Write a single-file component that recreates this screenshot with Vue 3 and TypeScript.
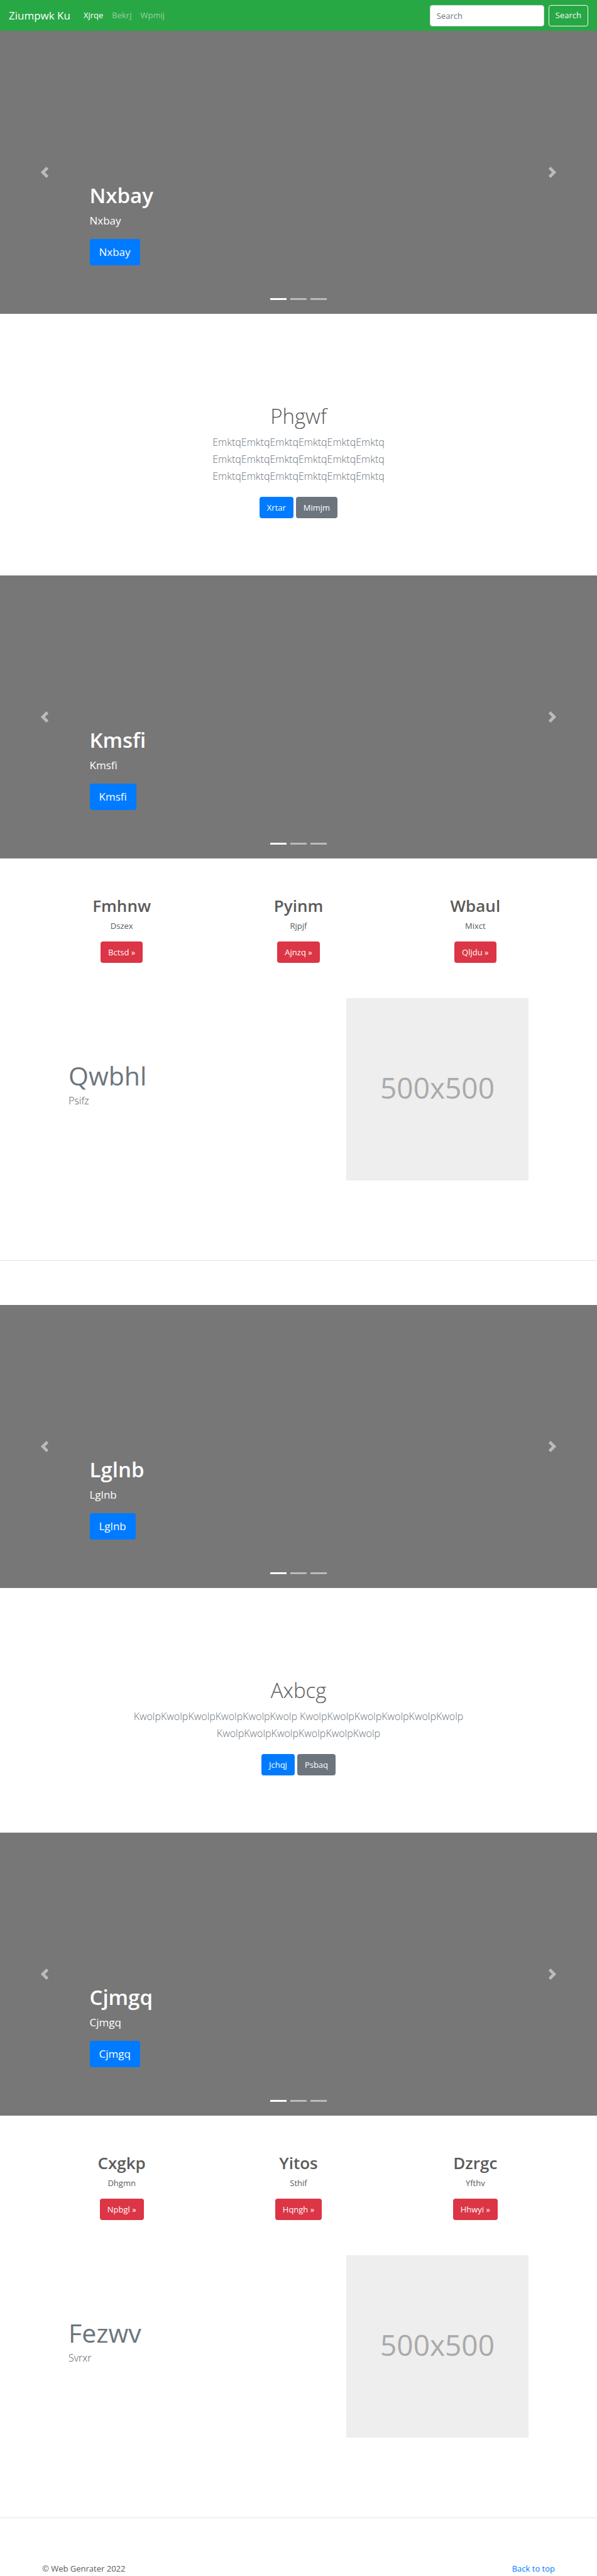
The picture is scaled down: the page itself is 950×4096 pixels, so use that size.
<script setup lang="ts">
import { ref } from 'vue'

interface Card {
  title: string
  text: string
  action: string
}

interface Intro {
  title: string
  text: string
  primary: string
  secondary: string
}

interface Block {
  hero: string
  intro: Intro
  banner: string
  cards: Card[]
  feature: { title: string; text: string }
}

const query = ref('')
const links = ['Xjrqe', 'Bekrj', 'Wpmij']

const repeat = (word: string): string => Array(3).fill(word.repeat(6)).join(' ')

const blocks: Block[] = [
  {
    hero: 'Nxbay',
    intro: { title: 'Phgwf', text: repeat('Emktq'), primary: 'Xrtar', secondary: 'Mimjm' },
    banner: 'Kmsfi',
    cards: [
      { title: 'Fmhnw', text: 'Dszex', action: 'Bctsd »' },
      { title: 'Pyinm', text: 'Rjpjf', action: 'Ajnzq »' },
      { title: 'Wbaul', text: 'Mixct', action: 'Qljdu »' },
    ],
    feature: { title: 'Qwbhl', text: 'Psifz' },
  },
  {
    hero: 'Lglnb',
    intro: { title: 'Axbcg', text: repeat('Kwolp'), primary: 'Jchqj', secondary: 'Psbaq' },
    banner: 'Cjmgq',
    cards: [
      { title: 'Cxgkp', text: 'Dhgmn', action: 'Npbgl »' },
      { title: 'Yitos', text: 'Sthif', action: 'Hqngh »' },
      { title: 'Dzrgc', text: 'Yfthv', action: 'Hhwyi »' },
    ],
    feature: { title: 'Fezwv', text: 'Svrxr' },
  },
]
</script>

<template>
  <div class="page">
    <header class="navbar">
      <a class="brand" href="#">Ziumpwk Ku</a>
      <nav class="links">
        <a v-for="(link, i) in links" :key="link" href="#" :class="{ active: i === 0 }">{{ link }}</a>
      </nav>
      <form class="search" @submit.prevent>
        <input v-model="query" type="search" placeholder="Search" aria-label="Search" />
        <button type="submit">Search</button>
      </form>
    </header>

    <main>
      <template v-for="block in blocks" :key="block.hero">
        <template v-for="name in [block.hero, block.banner]" :key="name">
          <section class="carousel">
            <button class="control prev" type="button" aria-label="Previous">
              <svg viewBox="0 0 8 8"><path d="M5.25 0l-4 4 4 4 1.5-1.5L4.25 4l2.5-2.5L5.25 0z" /></svg>
            </button>
            <div class="caption">
              <h1>{{ name }}</h1>
              <p>{{ name }}</p>
              <a class="btn btn-lg primary" href="#">{{ name }}</a>
            </div>
            <button class="control next" type="button" aria-label="Next">
              <svg viewBox="0 0 8 8"><path d="M2.75 0l-1.5 1.5L3.75 4l-2.5 2.5L2.75 8l4-4-4-4z" /></svg>
            </button>
            <div class="indicators">
              <button v-for="n in 3" :key="n" type="button" :class="{ active: n === 1 }" :aria-label="`Slide ${n}`"></button>
            </div>
          </section>

          <section v-if="name === block.hero" class="intro">
            <h1>{{ block.intro.title }}</h1>
            <p>{{ block.intro.text }}</p>
            <div class="actions">
              <a class="btn primary" href="#">{{ block.intro.primary }}</a>
              <a class="btn secondary" href="#">{{ block.intro.secondary }}</a>
            </div>
          </section>
        </template>

        <section class="cards">
          <article v-for="card in block.cards" :key="card.title">
            <h2>{{ card.title }}</h2>
            <p>{{ card.text }}</p>
            <a class="btn danger" href="#">{{ card.action }}</a>
          </article>
        </section>

        <section class="feature">
          <div class="feature-text">
            <h2>{{ block.feature.title }}</h2>
            <p>{{ block.feature.text }}</p>
          </div>
          <div class="placeholder">500x500</div>
        </section>

        <hr />
      </template>
    </main>

    <footer class="footer">
      <span>© Web Genrater 2022</span>
      <a href="#">Back to top</a>
    </footer>
  </div>
</template>

<style>
body {
  margin: 0;
  background: #fff;
}
</style>

<style scoped>
.page {
  font-family: 'Open Sans', 'Noto Sans', sans-serif;
  font-size: 13px;
  line-height: 21px;
  color: #5a5a5a;
}

.page * {
  box-sizing: border-box;
}

h1,
h2,
p {
  margin: 0;
}

a {
  text-decoration: none;
}

button,
input {
  font: inherit;
}

.navbar {
  display: flex;
  align-items: center;
  height: 49px;
  padding: 0 14px;
  background: #28a745;
}

.brand {
  margin-right: 14px;
  font-size: 17px;
  color: #fff;
}

.links {
  display: flex;
  margin-right: auto;
}

.links a {
  padding: 0 7px;
  color: rgba(255, 255, 255, 0.5);
}

.links a.active {
  color: #fff;
}

.search {
  display: flex;
  gap: 7px;
}

.search input {
  width: 182px;
  height: 34px;
  padding: 0 10px;
  border: 1px solid #ced4da;
  border-radius: 4px;
  background: #fff;
  color: #495057;
}

.search input::placeholder {
  color: #6c757d;
  opacity: 1;
}

.search button {
  height: 34px;
  padding: 0 10px;
  border: 1px solid #f8f9fa;
  border-radius: 4px;
  background: transparent;
  color: #f8f9fa;
}

.btn {
  display: inline-block;
  padding: 0 12px;
  border-radius: 4px;
  line-height: 34px;
  color: #fff;
}

.btn-lg {
  padding: 0 15px;
  font-size: 17px;
  line-height: 42px;
}

.primary {
  background: #007bff;
}

.secondary {
  background: #6c757d;
}

.danger {
  background: #dc3545;
}

.carousel {
  position: relative;
  display: flex;
  height: 450px;
  background: #777;
  color: #fff;
}

.control {
  display: flex;
  align-items: center;
  justify-content: center;
  width: 15%;
  padding: 0;
  border: 0;
  background: none;
  opacity: 0.5;
}

.control svg {
  width: 18px;
  height: 18px;
  fill: #fff;
}

.caption {
  flex: 1;
  align-self: flex-end;
  padding-bottom: 77px;
}

.caption h1 {
  margin-bottom: 6px;
  font-size: 33px;
  font-weight: 600;
  line-height: 42px;
}

.caption p {
  margin-bottom: 17px;
  font-size: 17px;
  line-height: 25px;
}

.caption .btn {
  display: block;
  width: fit-content;
}

.indicators {
  position: absolute;
  right: 0;
  bottom: 22px;
  left: 0;
  display: flex;
  justify-content: center;
  gap: 6px;
}

.indicators button {
  width: 26px;
  height: 3px;
  padding: 0;
  border: 0;
  background: #fff;
  opacity: 0.5;
}

.indicators button.active {
  opacity: 1;
}

.intro {
  max-width: 540px;
  margin: 0 auto;
  padding: 142px 0 91px;
  text-align: center;
}

.intro h1 {
  margin-bottom: 7px;
  font-size: 33px;
  font-weight: 300;
  line-height: 42px;
}

.intro p {
  margin-bottom: 19px;
  font-size: 16px;
  font-weight: 300;
  line-height: 27px;
  color: #6c757d;
}

.actions {
  display: flex;
  justify-content: center;
  gap: 4px;
}

.cards {
  display: grid;
  grid-template-columns: repeat(3, 1fr);
  max-width: 844px;
  margin: 0 auto;
  padding: 58px 0 56px;
  text-align: center;
}

.cards h2 {
  margin-bottom: 5px;
  font-size: 26px;
  font-weight: 600;
  line-height: 34px;
}

.cards p {
  margin-bottom: 14px;
}

.feature {
  display: flex;
  align-items: flex-start;
  justify-content: space-between;
  max-width: 732px;
  margin: 0 auto;
}

.feature-text {
  padding-top: 97px;
}

.feature h2 {
  font-size: 41px;
  font-weight: 400;
  line-height: 53px;
  color: #6c757d;
}

.feature p {
  font-size: 16px;
  font-weight: 300;
  line-height: 27px;
}

.placeholder {
  display: flex;
  align-items: center;
  justify-content: center;
  width: 290px;
  aspect-ratio: 1;
  padding-bottom: 6px;
  background: #eee;
  color: #aaa;
  font-size: 46px;
}

hr {
  height: 1px;
  margin: 127px 0 70px;
  border: 0;
  background: #e5e5e5;
}

.footer {
  display: flex;
  justify-content: space-between;
  max-width: 844px;
  margin: 0 auto;
  padding: 0 14px;
}

.footer a {
  color: #007bff;
}
</style>
